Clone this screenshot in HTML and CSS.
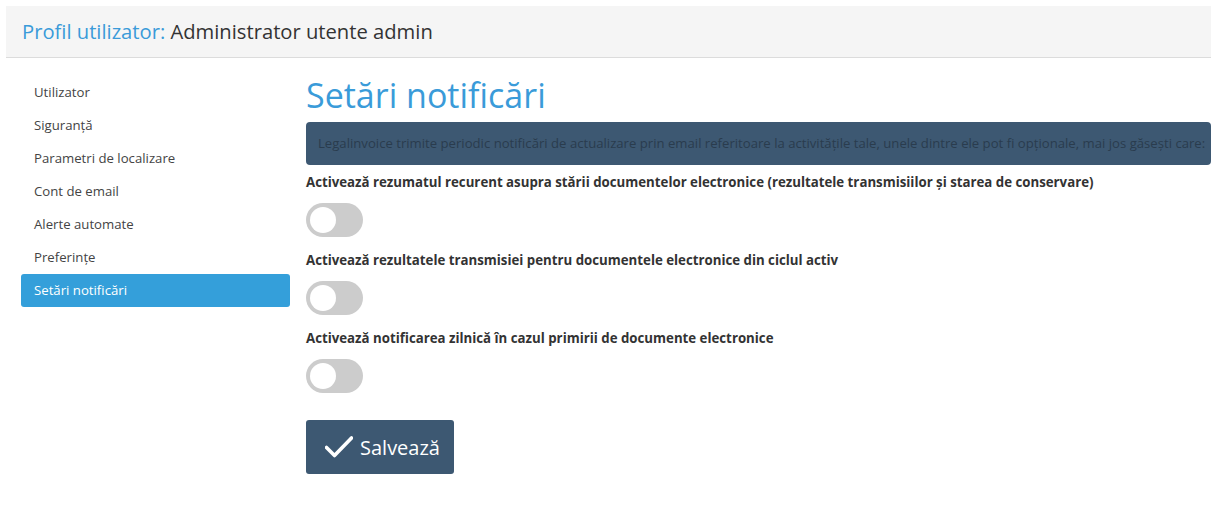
FILE: index.html
```html
<!doctype html>
<html>
  <head>
    <meta charset="utf-8">
    <title>Profil utilizator</title>
    <link rel="stylesheet" href="styles.css">
  </head>
  <body>
    <div class="page">
      <div class="page-header">
        <span class="hl">Profil utilizator:</span> Administrator utente admin
      </div>
      <div class="layout">
        <ul class="side-nav">
          <li>Utilizator</li>
          <li>Siguranță</li>
          <li>Parametri de localizare</li>
          <li>Cont de email</li>
          <li>Alerte automate</li>
          <li>Preferințe</li>
          <li class="active">Setări notificări</li>
        </ul>
        <div class="content">
          <h1>Setări notificări</h1>
          <div class="alert">Legalinvoice trimite periodic notificări de actualizare prin email referitoare la activitățile tale, unele dintre ele pot fi opționale, mai jos găsești care:</div>
          <div class="field">
            <label>Activează rezumatul recurent asupra stării documentelor electronice (rezultatele transmisiilor și starea de conservare)</label>
            <span class="switch"><span class="knob"></span></span>
          </div>
          <div class="field">
            <label>Activează rezultatele transmisiei pentru documentele electronice din ciclul activ</label>
            <span class="switch"><span class="knob"></span></span>
          </div>
          <div class="field">
            <label>Activează notificarea zilnică în cazul primirii de documente electronice</label>
            <span class="switch"><span class="knob"></span></span>
          </div>
          <button class="btn-save">
            <svg width="28" height="22" viewBox="0 0 28 22"><path d="M1.5 11.5 L9.5 19.5 L26.5 2" fill="none" stroke="#fff" stroke-width="3.6" stroke-linecap="round" stroke-linejoin="round"/></svg>
            Salvează
          </button>
        </div>
      </div>
    </div>
  </body>
</html>
```

FILE: styles.css
```css
body {margin:0;font-family:"Open Sans", "Noto Sans", sans-serif;color:#333;background:#fff;}
.page {padding:6px 10px 0 6px;}

.page-header {height:51px;line-height:51px;padding-left:16px;background:#f5f5f5;border-bottom:1px solid #dcdcdc;
  font-size:20.2px;color:#333;white-space:nowrap;}
.page-header .hl {color:#3a9bd9;}

.layout {display:flex;gap:16px;padding-top:18px;}

.side-nav {list-style:none;margin:0 0 0 15px;padding:0;width:269px;flex-shrink:0;}
.side-nav li {font-size:13.2px;line-height:19px;padding:7px 13px;color:#444;border-radius:3px;}
.side-nav li.active {background:#349fda;color:#fff;}

.content {flex:1;min-width:0;margin-top:-1px;}
.content h1 {margin:0;font-size:34px;line-height:40px;font-weight:normal;color:#3a9bd9;}

.alert {margin-top:7px;background:#3d5872;color:#2a3c4e;border-radius:4px;font-size:13.15px;line-height:19px;
  padding:12px 2px 12px 12px;white-space:nowrap;overflow:hidden;}

.field {margin-top:8px;margin-bottom:14px;}
.field + .field {margin-top:0;}
.field label {display:block;font-size:13.25px;line-height:19px;font-weight:bold;color:#333;margin-bottom:11px;}

.switch {display:block;position:relative;width:57px;height:34px;border-radius:17px;background:#ccc;}
.switch .knob {position:absolute;left:4px;top:4px;width:26px;height:26px;border-radius:50%;background:#fff;}

.btn-save {margin-top:27px;display:flex;align-items:center;gap:7px;height:54px;padding:0 14px 0 19px;
  background:#3d5872;color:#fff;border:0;border-radius:3px;font-family:"Open Sans", sans-serif;font-size:20px;}
```
